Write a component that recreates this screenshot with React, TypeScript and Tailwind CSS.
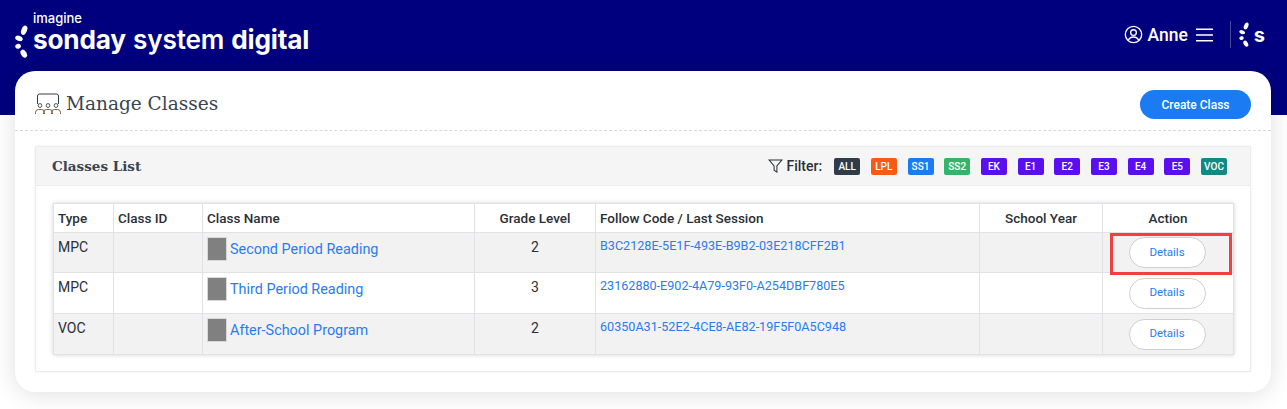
import * as React from "react";

const filters = [
  { label: "ALL", color: "bg-[#2f3d4a]" },
  { label: "LPL", color: "bg-[#f85a16]" },
  { label: "SS1", color: "bg-[#1a7bf2]" },
  { label: "SS2", color: "bg-[#36b368]" },
  { label: "EK", color: "bg-[#5a0ff0]" },
  { label: "E1", color: "bg-[#5a0ff0]" },
  { label: "E2", color: "bg-[#5a0ff0]" },
  { label: "E3", color: "bg-[#5a0ff0]" },
  { label: "E4", color: "bg-[#5a0ff0]" },
  { label: "E5", color: "bg-[#5a0ff0]" },
  { label: "VOC", color: "bg-[#128a84]" },
];

const rows = [
  { type: "MPC", name: "Second Period Reading", grade: "2", code: "B3C2128E-5E1F-493E-B9B2-03E218CFF2B1", height: "h-[40px]", striped: true, marked: true },
  { type: "MPC", name: "Third Period Reading", grade: "3", code: "23162880-E902-4A79-93F0-A254DBF780E5", height: "h-[41px]", striped: false, marked: false },
  { type: "VOC", name: "After-School Program", grade: "2", code: "60350A31-52E2-4CE8-AE82-19F5F0A5C948", height: "h-[41px]", striped: true, marked: false },
];

const Petals = ({ className }: { className: string }) => (
  <svg viewBox="0 0 16 38" className={className} fill="white">
    <ellipse cx="10.500" cy="6" rx="3.200" ry="5.600" transform="rotate(22 10.500 6)" />
    <ellipse cx="4.500" cy="15.500" rx="4.500" ry="2.900" transform="rotate(20 4.500 15.500)" />
    <ellipse cx="3.500" cy="24.500" rx="3.300" ry="2.800" transform="rotate(-15 3.500 24.500)" />
    <ellipse cx="10" cy="33" rx="3.200" ry="5" transform="rotate(-30 10 33)" />
  </svg>
);

const ClassroomIcon = () => (
  <svg viewBox="0 0 26 22" className="h-[22px] w-[26px]" fill="none" strokeWidth="1">
    <path d="M2.500 11V3a2 2 0 0 1 2-2h17a2 2 0 0 1 2 2v8" stroke="#2f3d4a" />
    <circle cx="5" cy="12.500" r="1.900" stroke="#4b5563" />
    <circle cx="13" cy="12.500" r="1.900" stroke="#4b5563" />
    <circle cx="21" cy="12.500" r="1.900" stroke="#4b5563" />
    <path d="M.5 21v-1.500a3 3 0 0 1 3-3h3a3 3 0 0 1 3 3V21M8.500 21v-1.500a3 3 0 0 1 3-3h3a3 3 0 0 1 3 3V21M16.500 21v-1.500a3 3 0 0 1 3-3h3a3 3 0 0 1 3 3V21" stroke="#7a5a3a" />
  </svg>
);

const App = () => {
  return (
    <div className="w-[1287px] h-[409px] overflow-hidden bg-white font-['Roboto',sans-serif] text-[#2b2f36]">
      <header className="h-[115px] bg-[#00007f] px-[15px] pt-[11px] flex items-start justify-between">
        <div className="flex items-start">
          <Petals className="mt-[14px] h-[33px] w-[14px]" />
          <div className="ml-[4px] font-['Inter',sans-serif] text-white">
            <div className="text-[13px] leading-[15px] font-medium">imagine</div>
            <div className="text-[26.200px] leading-[28px] tracking-[-0.2px] whitespace-nowrap">
              <span className="font-bold">sonday</span> <span className="font-semibold">system</span>{" "}
              <span className="font-bold">digital</span>
            </div>
          </div>
        </div>
        <div className="flex items-center pt-[10px] pr-[7px] text-white">
          <svg viewBox="0 0 20 20" className="h-[19px] w-[19px]" fill="none" stroke="white" strokeWidth="1.400">
            <circle cx="10" cy="10" r="8.600" />
            <circle cx="10" cy="8" r="3" />
            <path d="M4.500 16.200c1-2.600 3-3.600 5.500-3.600s4.500 1 5.500 3.600" />
          </svg>
          <span className="ml-[4px] text-[17.500px] leading-[26px] font-medium">Anne</span>
          <svg viewBox="0 0 18 14" className="ml-[8px] h-[14px] w-[17px]" stroke="white" strokeWidth="1.600">
            <path d="M0 1h18M0 7h18M0 13h18" />
          </svg>
          <div className="ml-[17px] h-[27px] w-px bg-[#4a4a9a]" />
          <Petals className="ml-[8px] h-[25px] w-[11px]" />
          <span className="ml-[4px] font-['Inter',sans-serif] text-[20px] leading-[26px] font-bold">s</span>
        </div>
      </header>

      <main className="mx-[15px] -mt-[44px] h-[321px] w-[1256px] rounded-[20px] bg-white shadow-[0_2px_24px_rgba(0,0,0,0.13)]">
        <div className="h-[60px] border-b border-dashed border-[#d9d9d9] pl-[20px] pr-[20px] flex items-center justify-between">
          <div className="flex items-center gap-[5px] pt-[6px]">
            <ClassroomIcon />
            <h1 className="font-['DejaVu_Serif',serif] text-[18.500px] leading-[26px] text-[#3a4450]">Manage Classes</h1>
          </div>
          <button className="mt-[8px] h-[29px] w-[111px] rounded-full bg-[#1a7bf2] text-[12px] font-medium text-white">
            Create Class
          </button>
        </div>

        <section className="mx-[20px] mt-[15px] h-[226px] w-[1216px] border border-[#ececec] shadow-[0_0_3px_rgba(0,0,0,0.06)]">
          <div className="h-[39px] bg-[#f5f5f5] border-b border-[#ececec] pl-[16px] pr-[23px] flex items-center justify-between">
            <h2 className="font-['DejaVu_Serif',serif] text-[13.500px] font-bold text-[#3a4450]">Classes List</h2>
            <div className="flex items-center">
              <svg viewBox="0 0 16 15" className="mr-[3px] h-[14px] w-[15px]" fill="none" stroke="#2b2f36" strokeWidth="1.100">
                <path d="M1 1h14L9.500 7.500V14L6.500 12V7.500z" />
              </svg>
              <span className="mr-[12px] text-[14px] font-medium">Filter:</span>
              <div className="flex gap-[10.700px]">
                {filters.map((f) => (
                  <span
                    key={f.label}
                    className={`${f.color} flex h-[17px] w-[26px] items-center justify-center rounded-[2px] text-[10px] font-medium text-white`}
                  >
                    {f.label}
                  </span>
                ))}
              </div>
            </div>
          </div>

          <div className="pl-[17px] pt-[17px]">
            <table className="w-[1180px] table-fixed border-collapse text-[14px] shadow-[0_0_4px_rgba(0,0,0,0.18)]">
              <colgroup>
                <col className="w-[60px]" />
                <col className="w-[89px]" />
                <col className="w-[272px]" />
                <col className="w-[121px]" />
                <col className="w-[384px]" />
                <col className="w-[123px]" />
                <col className="w-[131px]" />
              </colgroup>
              <thead>
                <tr className="h-[29px] bg-white text-[13.500px] font-medium">
                  <th className="border border-[#e2e2e6] px-[4px] text-left font-medium">Type</th>
                  <th className="border border-[#e2e2e6] px-[4px] text-left font-medium">Class ID</th>
                  <th className="border border-[#e2e2e6] px-[4px] text-left font-medium">Class Name</th>
                  <th className="border border-[#e2e2e6] text-center font-medium">Grade Level</th>
                  <th className="border border-[#e2e2e6] px-[4px] text-left font-medium">Follow Code / Last Session</th>
                  <th className="border border-[#e2e2e6] text-center font-medium">School Year</th>
                  <th className="border border-[#e2e2e6] text-center font-medium">Action</th>
                </tr>
              </thead>
              <tbody>
                {rows.map((row) => (
                  <tr key={row.code} className={`${row.height} ${row.striped ? "bg-[#f2f2f2]" : "bg-white"}`}>
                    <td className="border border-[#e2e2e6] px-[4px] pt-[4px] align-top">{row.type}</td>
                    <td className="border border-[#e2e2e6]" />
                    <td className="border border-[#e2e2e6] px-[4px] pt-[4px] align-top">
                      <div className="flex items-center">
                        <span className="h-[24px] w-[20px] border border-[#d8d8d8] bg-[#808080]" />
                        <a className="ml-[3px] pt-[1px] text-[14.400px] text-[#2b7bf0]">{row.name}</a>
                      </div>
                    </td>
                    <td className="border border-[#e2e2e6] pt-[4px] text-center align-top">{row.grade}</td>
                    <td className="border border-[#e2e2e6] px-[4px] pt-[4px] align-top text-[12.600px] text-[#2b7bf0]">
                      {row.code}
                    </td>
                    <td className="border border-[#e2e2e6]" />
                    <td className="relative border border-[#e2e2e6] text-center align-middle">
                      <button className="mr-[2px] h-[31px] w-[77px] rounded-full border border-[#cfcfcf] bg-white text-[11.500px] text-[#2b7bf0]">
                        Details
                      </button>
                      {row.marked && (
                        <span className="absolute left-[7px] top-0 h-[42px] w-[122px] border-[3px] border-[#f04040]" />
                      )}
                    </td>
                  </tr>
                ))}
              </tbody>
            </table>
          </div>
        </section>
      </main>
    </div>
  );
};

export default App;
